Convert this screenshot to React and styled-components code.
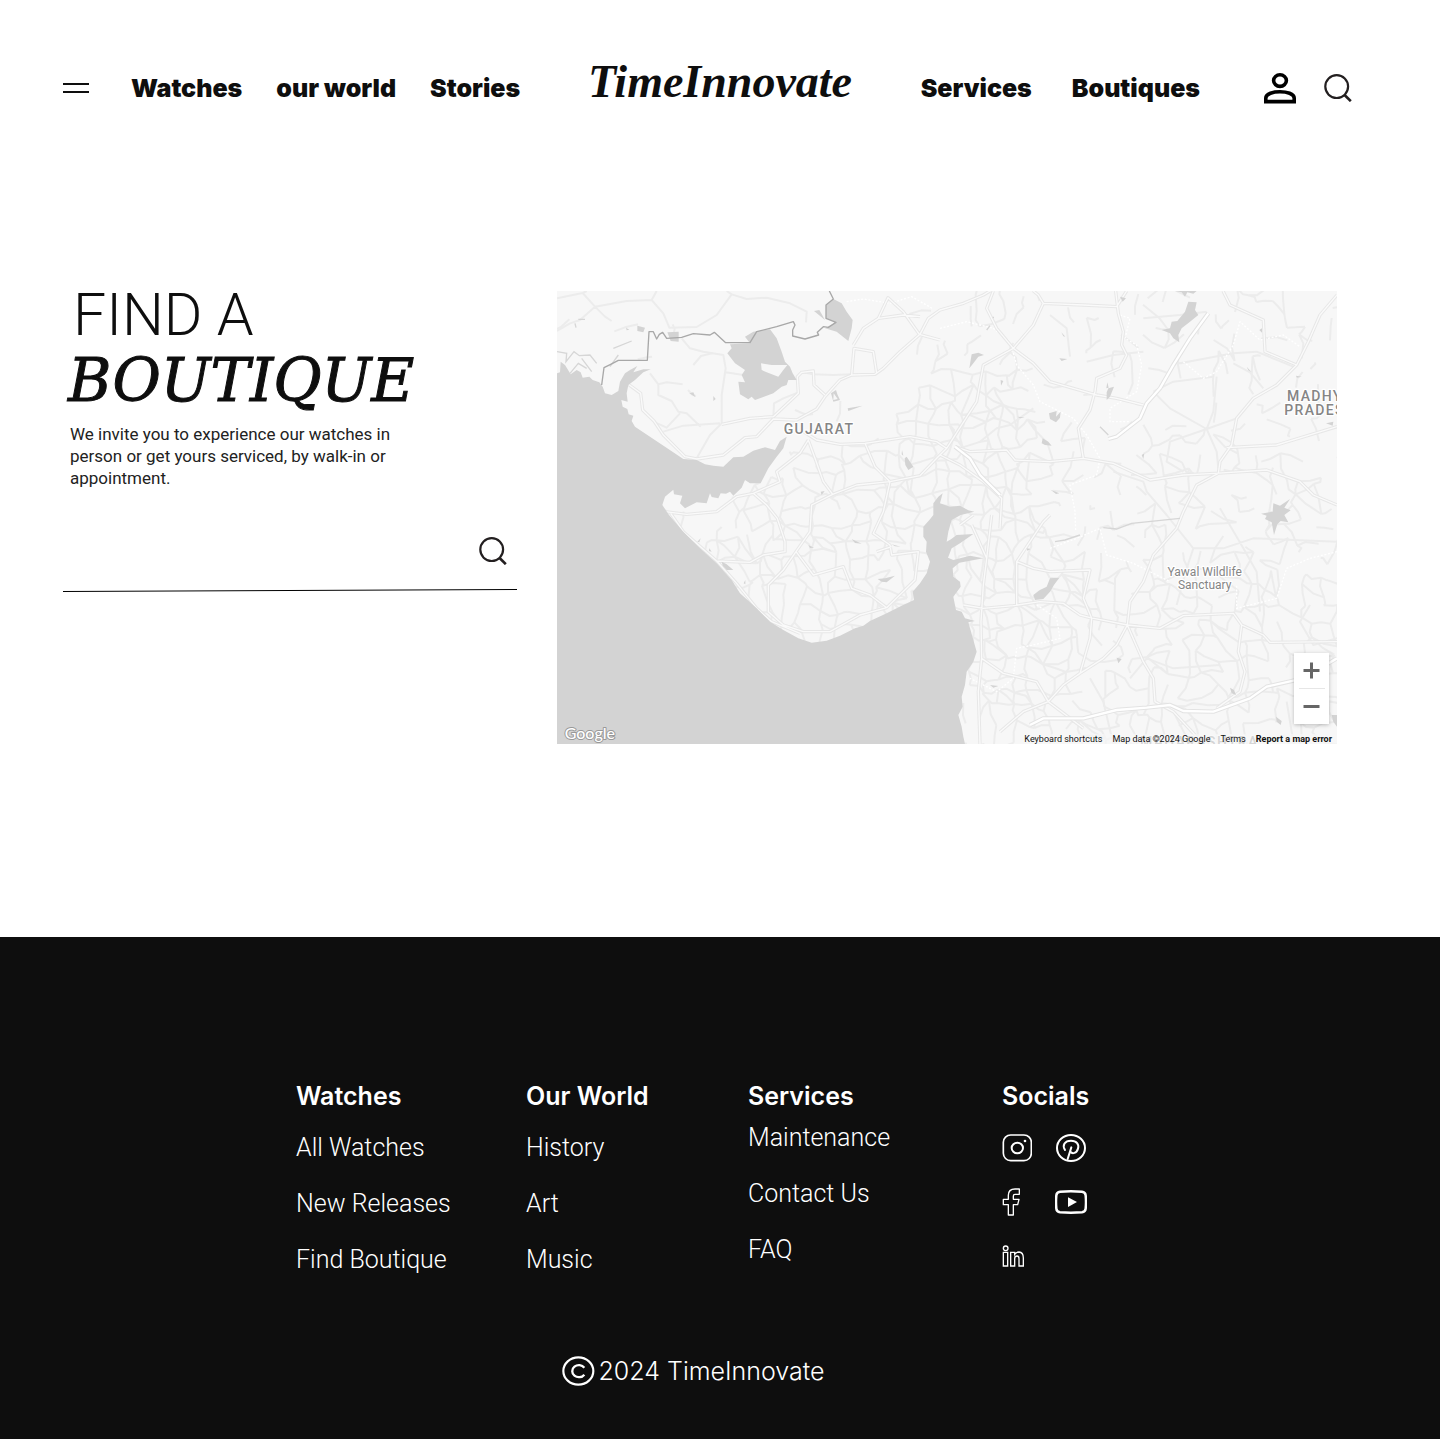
import React from "react";
import styled, { createGlobalStyle } from "styled-components";

const ink = "#0e0e0e";

const GlobalStyle = createGlobalStyle`
  *, *::before, *::after { box-sizing: border-box; }
  body {
    margin: 0;
    background: #fff;
    color: ${ink};
    font-family: Inter, "Liberation Sans", sans-serif;
  }
  a { color: inherit; text-decoration: none; }
  button { padding: 0; border: 0; background: none; color: inherit; font: inherit; cursor: pointer; }
  ul { margin: 0; padding: 0; list-style: none; }
  svg { display: block; }
`;

/* ---------- header ---------- */

const Header = styled.header`
  display: grid;
  grid-template-columns: 1fr auto 1fr;
  align-items: baseline;
  padding: 52px 63px 0;
`;

const NavGroup = styled.nav`
  display: flex;
  align-items: baseline;
  justify-content: ${(p) => (p.$end ? "flex-end" : "flex-start")};
  gap: ${(p) => p.$gap}px;
  padding-right: ${(p) => (p.$end ? 25 : 0)}px;
`;

const NavLink = styled.a`
  font-size: 25px;
  line-height: 32px;
  font-weight: 900;
  white-space: nowrap;
`;

const MenuButton = styled.button`
  align-self: center;
  display: grid;
  gap: 6px;
  width: 26px;
  margin-right: 8px;

  span { height: 2px; background: ${ink}; }
`;

const Logo = styled.a`
  font-family: "Liberation Serif", serif;
  font-size: 46px;
  line-height: 60px;
  font-style: italic;
  font-weight: 700;
`;

const IconGroup = styled.div`
  display: flex;
  align-items: center;
  align-self: center;
  gap: 28px;
  margin-left: 24px;
`;

/* ---------- boutique finder ---------- */

const Main = styled.main`
  display: grid;
  grid-template-columns: minmax(0, 454fr) minmax(0, 780fr);
  align-items: start;
  gap: 40px;
  padding: 179px 103px 193px 63px;
`;

const Finder = styled.section`
  display: flex;
  flex-direction: column;
`;

const Title = styled.h1`
  display: flex;
  flex-direction: column;
  margin: 0;
  font-weight: 400;
`;

const TitleTop = styled.span`
  padding-left: 10px;
  font-family: Roboto, sans-serif;
  font-size: 59px;
  line-height: 48px;
  font-weight: 300;
`;

const TitleBottom = styled.span`
  padding-left: 5px;
  font-family: "DejaVu Serif", serif;
  font-size: 59px;
  line-height: 84px;
  font-style: italic;
  -webkit-text-stroke: 1px ${ink};
`;

const Intro = styled.p`
  max-width: 340px;
  margin: 0 0 0 7px;
  color: #222;
  font-family: Roboto, sans-serif;
  font-size: 17px;
  line-height: 22px;
  font-weight: 400;
`;

const SearchForm = styled.form`
  display: flex;
  align-items: center;
  margin-top: 37px;
  padding: 0 10px 0 7px;
  height: 50px;

  input {
    flex: 1;
    min-width: 0;
    height: 40px;
    border: 0;
    outline: 0;
    background: none;
    font: 400 17px/22px Roboto, sans-serif;
  }
`;

const Rule = styled.svg`
  width: 100%;
  height: 4px;
  margin-top: 12px;
`;

/* ---------- map ---------- */

const MapFrame = styled.section`
  position: relative;
  overflow: hidden;
  aspect-ratio: 780 / 453;
  background: #f7f7f7;
`;

const MapDrawing = styled.svg`
  width: 100%;
  height: 100%;
`;

const ZoomControl = styled.div`
  position: absolute;
  right: 8px;
  bottom: 20px;
  display: flex;
  flex-direction: column;
  align-items: center;
  width: 35px;
  background: #fff;
  box-shadow: 0 1px 4px rgba(0, 0, 0, 0.25);
`;

const ZoomButton = styled.button`
  display: grid;
  place-items: center;
  width: 35px;
  height: 35px;
`;

const ZoomDivider = styled.div`
  width: 26px;
  height: 1px;
  background: #e6e6e6;
`;

const Attribution = styled.div`
  position: absolute;
  right: 0;
  bottom: 0;
  display: flex;
  gap: 10px;
  padding: 0 5px;
  background: rgba(247, 247, 247, 0.7);
  color: #111;
  font-family: Roboto, sans-serif;
  font-size: 9px;
  line-height: 10px;
  white-space: nowrap;
`;

const ErrorLink = styled.a`
  font-weight: 700;
`;

/* ---------- footer ---------- */

const Footer = styled.footer`
  padding: 143px 24px 52px 296px;
  background: ${ink};
  color: #fff;
`;

const FooterInner = styled.div`
  display: flex;
  flex-direction: column;
  width: fit-content;
`;

const Columns = styled.div`
  display: grid;
  grid-template-columns: 230px 222px 254px auto;
`;

const ColumnTitle = styled.h2`
  margin: 0;
  font-size: 25px;
  line-height: 32px;
  font-weight: 600;
`;

const LinkList = styled.ul`
  display: grid;
  gap: 24px;
  margin-top: ${(p) => (p.$tight ? 10 : 20)}px;
  font-family: Roboto, sans-serif;
  font-size: 25px;
  line-height: 32px;
  font-weight: 300;
`;

const Socials = styled.ul`
  display: grid;
  grid-template-columns: 50px 38px;
  grid-auto-rows: 32px;
  gap: 22px 0;
  align-items: center;
  margin-top: 20px;

  li:nth-child(even) { justify-self: center; }
  a { display: block; }
`;

const Copyright = styled.p`
  display: flex;
  align-items: center;
  justify-content: center;
  gap: 4px;
  margin: 79px 0 0;
  font-size: 25px;
  line-height: 32px;
  font-weight: 300;
`;

/* ---------- icons ---------- */

const SearchIcon = () => (
  <svg width="28" height="28" viewBox="0 0 28 28" fill="none" stroke="#231f20" strokeWidth="2.2" aria-hidden="true">
    <circle cx="12.7" cy="12.6" r="11.4" />
    <path d="M20.6 21l6.2 6.2" strokeWidth="2.6" />
  </svg>
);

const PersonIcon = () => (
  <svg width="32" height="31" viewBox="0 0 32 31" fill="none" stroke="#000" strokeWidth="3.6" aria-hidden="true">
    <ellipse cx="16" cy="7.6" rx="6.4" ry="5.8" />
    <path d="M1.8 28.6V25C1.8 20.6 9.4 18.8 16 18.8S30.2 20.6 30.2 25v3.6z" />
  </svg>
);

const InstagramIcon = () => (
  <svg width="30" height="28" viewBox="37 192 90 84" fill="none" stroke="#fff" strokeWidth="5" aria-hidden="true">
    <rect x="41" y="195" width="84" height="77" rx="22" />
    <ellipse cx="83" cy="234" rx="17" ry="16" strokeWidth="6" />
    <circle cx="106" cy="213" r="4" fill="#fff" stroke="none" />
  </svg>
);

const PinterestIcon = () => (
  <svg width="30" height="28" viewBox="201 197 90 84" fill="none" stroke="#fff" strokeWidth="6" strokeLinecap="round" aria-hidden="true">
    <ellipse cx="246" cy="239" rx="42" ry="39" />
    <path d="M228 245C219 231 227 217 246 217c17 0 25 11 21 24-4 14-17 17-23 9M247 237l-11 35" />
  </svg>
);

const FacebookIcon = () => (
  <svg width="18" height="28" viewBox="40 354 54 84" fill="none" stroke="#fff" strokeWidth="4" strokeLinejoin="round" aria-hidden="true">
    <path d="M59 435h15v-31h13l4-16H74v-10q0-5 5-5h13v-16H79q-20 0-20 19v12H44v16h15z" />
  </svg>
);

const YoutubeIcon = () => (
  <svg width="32" height="24" viewBox="186 366 96 72" fill="none" stroke="#fff" strokeWidth="7.5" aria-hidden="true">
    <path d="M201 371q32-2 66 0 10 1 11 11 2 20 0 40-1 10-11 11-34 2-66 0-10-1-11-11-2-20 0-40 1-10 11-11z" />
    <path d="M225 388l27 14-27 15z" fill="#fff" stroke="none" />
  </svg>
);

const LinkedinIcon = () => (
  <svg width="22" height="22" viewBox="37 527 66 66" fill="none" stroke="#fff" strokeWidth="4" aria-hidden="true">
    <circle cx="48" cy="537" r="7" />
    <path d="M41 549h13v41H41zM63 549h12v6q5-7 13-7 13 1 13 18v24H88v-22q0-8-6-8-7 0-7 8v22H63z" />
  </svg>
);

const CopyrightIcon = () => (
  <svg width="33" height="30" viewBox="57 47 99 90" fill="none" stroke="#fff" strokeWidth="6.5" aria-hidden="true">
    <ellipse cx="106" cy="92" rx="45" ry="41" />
    <path d="M124 82a20 18 0 1 0 0 21" strokeWidth="7" />
  </svg>
);

/* ---------- map data ---------- */

// Small repeatable generator, so the side roads are the same on every visit.
const createRandom = (seed) => {
  let s = seed;
  return () => {
    s = (s * 16807) % 2147483647;
    return s / 2147483647;
  };
};

const near = (x, y, cx, cy, rx, ry) => Math.hypot((x - cx) / rx, (y - cy) / ry) < 1;

const roadDensity = (x, y) => {
  if (near(x, y, 1230, 490, 230, 240)) return 0.95;
  if (near(x, y, 850, 790, 380, 270)) return 0.78;
  if (near(x, y, 1390, 970, 190, 330)) return 0.85;
  if (x > 1500 && y > 850) return 0.6;
  if (x > 1300 && y > 500) return 0.4;
  if (x > 1080) return 0.22;
  if (y > 470 && x > 690) return 0.6;
  return 0.04;
};

const buildSideRoads = () => {
  const random = createRandom(4711);
  const step = 50;
  const cols = 48;
  const rows = 28;
  const nodes = Array.from({ length: rows + 1 }, (_, r) =>
    Array.from({ length: cols + 1 }, (_, c) => [
      Math.round(c * step + (random() - 0.5) * 44),
      Math.round(18 + r * step + (random() - 0.5) * 44),
    ])
  );
  const parts = [];
  const link = (a, b) => {
    if (random() > roadDensity(a[0], a[1])) return;
    const mx = Math.round((a[0] + b[0]) / 2 + (random() - 0.5) * 20);
    const my = Math.round((a[1] + b[1]) / 2 + (random() - 0.5) * 20);
    parts.push(`M${a[0]} ${a[1]}L${mx} ${my} ${b[0]} ${b[1]}`);
  };
  for (let r = 0; r < rows; r++) {
    for (let c = 0; c < cols; c++) {
      link(nodes[r][c], nodes[r][c + 1]);
      link(nodes[r][c], nodes[r + 1][c]);
      if (random() < 0.2) link(nodes[r][c], nodes[r + 1][c + 1]);
    }
  }
  return parts.join("");
};

const sideRoads = buildSideRoads();

const quietRoads = [
  "M21 40L98 24 135 65 230 48 305 45 320 18M98 24L110 18M21 138L60 115 90 105 135 65 165 95 185 108M305 45L340 85 358 128 440 126 500 90 545 28 530 18M545 28L590 42 650 38 720 55 770 80 768 112",
  "M300 265L325 298 350 292 398 298M325 298L325 330 365 348 385 380 410 385 452 425M310 410L350 428 390 385M527 262L580 270 640 262 710 245M750 260L790 268 850 270 905 268M340 440L400 422 510 415M440 520L480 450 515 415M395 160L420 190 460 200 520 210 527 250 515 330 515 415M670 400L672 355 700 340 745 322",
  "M1290 470L1340 430 1380 420 1450 370M1610 230L1690 210 1780 200M1810 320L1870 290 1990 275M1810 320L1860 370 1970 432 2060 400M1970 432L2000 500 2005 550M1970 432L1860 470 1850 530 1900 560M1560 215L1550 130 1500 90M2000 275L1990 380 1970 432M2050 235L2100 262 2140 310M2230 245L2120 200 2050 205 1890 235M1895 235L1870 235M1780 100L1890 90 1970 80",
  "M1690 560L1780 590 1790 620 1850 690 1930 790 2020 790 2110 760 2361 770M1930 790L1910 850 1880 960M2010 670L2080 790 2120 860 2130 980M2280 960L2250 1010 2290 1080 2361 1060M1620 1180L1660 1250 1690 1377M1740 1180L1790 1120 1870 1150 2010 1140M1870 1280L1920 1377M2210 1250L2230 1370",
].join("");

const mainRoads = [
  "M235 298L272 325 278 375 312 408 340 450 405 515 440 522 520 510 585 458 620 455 670 402 740 405 800 372 825 335 870 285 905 270 975 268 1000 250 1050 200 1110 148 1135 100 1170 75 1240 55 1300 30 1320 18",
  "M515 418L600 400 670 395 745 325 742 275 755 262 790 258 792 300 825 330M910 180L940 130 985 100 1014 38 1060 80 1108 148 1170 165M905 270L912 190 970 200 980 265M985 100L1060 90 1110 95",
  "M760 440L800 465 870 478 945 475 1080 455 1160 470 1190 490M945 475L975 545 1020 590 1110 572 1160 520 1190 490 1235 420 1280 350 1300 240 1390 190 1450 120 1480 55M1480 55L1465 30 1450 18M1480 55L1600 60 1700 65 1730 18M1330 18L1310 70 1340 130 1390 190 1450 235 1500 290 1570 310 1640 330 1700 340 1780 360",
  "M345 680L410 688 500 680 560 635 610 625 690 590 680 560 750 505 775 465M775 465L795 520 820 590 848 628 920 600 1020 590M848 628L785 660 780 740 738 800 700 855 655 900 655 980 700 1020 760 1040 840 1040 930 990 1010 968 1095 885 1105 800 1025 810 1020 780 970 745 1000 680 1020 590",
  "M610 625L650 660 682 700 705 770 705 800 640 810 600 832 500 828M738 800L790 870 880 845 905 910 960 930 1010 968M1025 785L980 800",
  "M362 685L400 740 500 828 560 895 620 970 665 1010 750 1045",
  "M1215 485L1260 500 1370 495 1395 525 1500 530 1600 520 1690 535 1800 585 1900 570 1995 565 2150 555 2250 590 2290 630 2361 660M1170 510L1230 540 1300 590 1355 640 1350 730",
  "M1697 18L1705 85 1720 140 1715 180 1730 210 1710 250 1640 280 1635 320 1620 375 1585 430 1600 520M2019 18L2040 60 2140 105 2145 200 2240 240 2180 300 2110 340 2060 400 2045 480 2010 530 2005 565 1940 600 1900 680 1880 730 1810 810 1780 890 1740 950 1732 1020M2240 240L2275 170 2310 90 2361 30M2030 488L2180 480 2361 425",
  "M1325 690L1310 820 1300 900 1293 1010 1295 1120 1285 1220 1290 1377M1230 720L1270 690M1265 720L1310 820M1240 960L1300 970 1390 962 1470 950 1540 955 1590 990 1620 998 1732 1020 1830 1030 1900 992 2050 985 2075 1020 2140 1050 2160 1072 2361 1070M1400 960L1400 830 1480 710 1500 690",
  "M1400 830L1450 850 1500 860 1620 855 1600 940 1625 1000 1620 1060 1590 1165M1732 1020L1780 1130 1810 1180 1815 1250 1870 1280 1960 1377M1732 1020L1700 1080 1660 1120 1590 1165 1540 1200 1495 1250 1420 1280 1350 1340M1295 1120L1360 1165 1460 1190 1495 1250 1600 1330M2075 1020L2065 1100 2085 1160 2070 1220 2000 1270",
].join("");

const highways = [
  "M1215 485L1260 520 1290 570 1350 630",
  "M1675 462L1700 455 1770 400 1790 355 1830 310 1870 240 1920 160 1975 85",
  "M1440 1320L1480 1300 1600 1300 1700 1275 1790 1268 1860 1260 1900 1278 1990 1280 2100 1240 2150 1205 2260 1180 2361 1120",
].join("");

const trails =
  "M890 50L940 42 1020 55 1085 35 1150 72M1170 130L1250 110 1330 130 1380 170 1400 240 1450 300 1470 350 1570 400 1610 450 1650 520 1640 570 1560 600 1575 680 1577 740M1710 90L1740 100 1725 160 1760 180 1775 240 1760 320 1680 370 1680 410 1740 410M1900 230L1960 280 2000 260 2050 180 2070 110 2130 165 2200 150 2250 185M1500 790L1580 760 1650 730 1670 810 1750 835 1820 870 1860 890M2361 800L2280 820 2210 850 2180 940 2060 970 2060 900M1460 960L1520 1000 1530 1060 1450 1080 1400 1090 1390 1180 1340 1220 1260 1180";

const sea =
  "M21 265L30 262 32 230 45 240 62 268 80 255 92 262 98 278 118 275 128 285 148 292 158 305 165 325 185 330 205 318 210 290 225 265 240 255 262 243 250 262 280 253 302 253 280 262 255 285 235 300 230 325 233 350 214 345 218 365 232 372 236 388 250 392 245 408 255 425 300 455 345 485 400 522 440 525 465 538 490 542 520 545 550 517 580 515 610 497 645 487 675 495 690 468 710 455 700 490 680 515 655 550 632 595 600 595 585 585 575 608 550 632 540 620 528 626 512 625 505 640 485 636 480 625 470 655 440 652 405 670 390 655 397 632 372 628 370 614 345 635 337 660 357 690 400 740 450 790 500 835 545 885 570 925 620 970 660 1010 700 1035 745 1060 785 1073 830 1067 870 1052 915 1030 940 1022 960 1008 1010 985 1055 962 1092 945 1088 920 1110 895 1130 865 1140 830 1128 800 1130 770 1120 755 1120 725 1140 703 1150 690 1150 655 1165 635 1178 625 1170 655 1200 665 1230 662 1255 676 1273 680 1232 690 1205 705 1195 740 1190 770 1203 763 1220 750 1270 747 1230 775 1205 790 1194 818 1210 825 1260 812 1300 820 1228 833 1208 850 1210 875 1230 890 1232 905 1210 935 1218 975 1235 980 1245 1000 1275 1008 1255 1012 1270 1065 1280 1100 1270 1130 1250 1160 1245 1200 1235 1235 1238 1265 1225 1290 1235 1325 1240 1355 1245 1377H21z";

const lakes = [
  "M585 155L610 140 660 133 680 160 695 200 705 230 720 245 728 265 740 285 715 285 710 300 695 305 670 325 615 345 605 335 595 343 570 328 565 290 585 292 575 270 585 255 555 235 532 205 545 190 540 178 600 175z",
  "M850 42L875 55 890 80 908 105 905 130 895 168 860 140 825 130 858 112 828 100 828 60zM792 78L808 75 825 105z",
  "M352 142L386 140 386 170 362 168zM262 122L285 128 280 142 262 138zM228 128L238 134 230 136zM418 325L430 322 436 336zM490 333L497 342 490 348zM893 370L938 362 895 378zM843 325L858 315 862 328 870 345 850 350zM851 325L850 345 863 342z",
  "M1064 520L1070 515 1090 545 1075 555 1066 540zM1056 495L1060 512 1055 508zM812 620L824 618 815 630zM1915 50L1940 52 1935 75 1945 90 1920 110 1895 130 1885 150 1888 172 1870 160 1860 145 1835 135 1860 130 1865 110 1882 108 1905 80zM1875 18L1940 18 1930 26 1912 22 1905 35 1895 22z",
  "M1265 208L1285 203 1302 210 1285 215 1270 235 1258 250 1262 225zM1352 285L1360 288 1353 302zM1528 220L1552 222 1535 228zM1534 142L1546 155 1540 154zM1710 35L1728 40 1718 50zM1670 322L1675 310 1692 305 1680 335 1670 345zM1672 292L1676 308 1669 310z",
  "M1497 385L1520 378 1518 395 1532 380 1530 398 1518 412 1500 402zM1478 460L1495 470 1505 482 1485 480 1475 475zM1402 395L1424 397 1410 400zM1775 510L1783 505 1780 522zM1502 614L1528 625 1518 627zM2328 415L2350 410 2348 422zM2128 135L2136 130 2136 143zM2090 245L2105 262 2095 256zM2238 272L2255 275 2240 278z",
  "M2220 642L2203 668 2222 676 2203 690 2215 712 2192 708 2182 718 2172 750 2165 712 2145 702 2150 692 2133 686 2168 680 2170 655 2190 662z",
  "M1450 930L1470 915 1490 905 1500 880 1528 878 1512 900 1500 920 1480 942 1455 945zM1700 1118L1715 1122 1705 1135zM2040 1208L2052 1215 2058 1230 2045 1225zM2178 1295L2195 1308 2192 1320 2180 1310zM2345 1290L2361 1290 2361 1325 2350 1310zM1430 790L1442 792 1432 797zM1320 1200L1345 1203 1330 1208z",
  "M515 830L530 838 550 855 530 855 518 842zM983 882L1005 880 1035 872 1010 892 995 890zM452 760L442 770 448 772zM775 780L792 788 780 789zM478 790L485 800 477 798zM586 885L586 898 581 895zM905 762L935 776 915 774zM1025 778L1052 785 1035 784z",
].join("");

const border =
  "M838 18L850 42 828 60 828 100 858 112 835 127 820 125 802 142 806 150 765 162 728 153 728 135 735 120 730 110 680 125 620 140 600 173 527 173 493 142 480 150 430 146 395 157 350 160 338 142 328 148 320 162 310 140 297 140 292 226 205 226 182 238 162 248 155 300";

const MapLabel = styled.text`
  font-family: Roboto, sans-serif;
  font-size: ${(p) => p.$size}px;
  font-weight: ${(p) => p.$weight || 500};
  letter-spacing: ${(p) => p.$spacing || 0}px;
  fill: #858585;
  stroke: #fff;
  stroke-width: 7px;
  stroke-linejoin: round;
  paint-order: stroke;
`;

const Wordmark = styled.text`
  font-family: Lato, sans-serif;
  font-size: 48px;
  font-weight: 500;
  fill: #fff;
  stroke: #999;
  stroke-width: 6px;
  stroke-linejoin: round;
  paint-order: stroke;
`;

const BoutiqueMap = () => (
  <MapFrame aria-label="Boutique map">
    <MapDrawing viewBox="21 18 2340 1359" preserveAspectRatio="xMidYMid slice">
      <rect x="21" y="18" width="2340" height="1359" fill="#f7f7f7" />
      <g fill="none" strokeLinejoin="round">
        <path d={sideRoads} stroke="#ececec" strokeWidth="6" />
        <path d={quietRoads} stroke="#ececec" strokeWidth="6" />
        <path d={trails} stroke="#fff" strokeWidth="4" strokeDasharray="6 5" />
        <path d={mainRoads} stroke="#e7e7e7" strokeWidth="10" />
        <path d={mainRoads} stroke="#fafafa" strokeWidth="4" />
        <path d={highways} stroke="#e3e3e3" strokeWidth="13" />
        <path d={highways} stroke="#fff" strokeWidth="7" />
      </g>
      <path d={sea} fill="#d3d3d3" />
      <path d={lakes} fill="#d3d3d3" fillRule="evenodd" />
      <path d="M633 235L665 240 712 240 700 255 685 275 650 262 635 255zM160 262L180 240 195 265 175 300 165 285z" fill="#f7f7f7" />
      <g fill="none" stroke="#d6d6d6" strokeWidth="4">
        <path d="M21 200L50 205 48 230 72 200 88 212 120 210 140 235M60 265L85 235 110 250M95 220L125 260M190 190L245 168M75 115L78 128M85 103H105M205 210L180 245" />
        <path d="M1515 770L1545 765 1590 750M1660 728L1700 732 1745 715 1890 700M1650 425L1675 450M1310 135L1320 122M1330 95V100" />
      </g>
      <path d={border} fill="none" stroke="#a8a8a8" strokeWidth="4" strokeLinejoin="round" />
      <MapLabel x="701" y="447" $size={42} $spacing={4}>GUJARAT</MapLabel>
      <MapLabel x="2211" y="347" $size={42} $spacing={4}>MADHYA</MapLabel>
      <MapLabel x="2203" y="389" $size={42} $spacing={4}>PRADESH</MapLabel>
      <MapLabel x="1964" y="873" $size={36} $weight={400} textAnchor="middle">Yawal Wildlife</MapLabel>
      <MapLabel x="1964" y="911" $size={36} $weight={400} textAnchor="middle">Sanctuary</MapLabel>
      <MapLabel x="1770" y="1386" $size={42} $spacing={4}>MAHARASHTRA</MapLabel>
      <Wordmark x="44" y="1361">Google</Wordmark>
    </MapDrawing>
    <ZoomControl>
      <ZoomButton type="button" aria-label="Zoom in">
        <svg width="17" height="17" viewBox="0 0 17 17" stroke="#666" strokeWidth="3" aria-hidden="true">
          <path d="M0.5 8.5h16M8.5 0.5v16" />
        </svg>
      </ZoomButton>
      <ZoomDivider />
      <ZoomButton type="button" aria-label="Zoom out">
        <svg width="17" height="17" viewBox="0 0 17 17" stroke="#666" strokeWidth="3" aria-hidden="true">
          <path d="M0.5 8.5h16" />
        </svg>
      </ZoomButton>
    </ZoomControl>
    <Attribution>
      <button type="button">Keyboard shortcuts</button>
      <span>Map data ©2024 Google</span>
      <a href="#terms">Terms</a>
      <ErrorLink href="#report">Report a map error</ErrorLink>
    </Attribution>
  </MapFrame>
);

/* ---------- page ---------- */

const footerColumns = [
  { title: "Watches", links: ["All Watches", "New Releases", "Find Boutique"] },
  { title: "Our World", links: ["History", "Art", "Music"] },
  { title: "Services", links: ["Maintenance", "Contact Us", "FAQ"], tight: true },
];

const socials = [
  ["Instagram", InstagramIcon],
  ["Pinterest", PinterestIcon],
  ["Facebook", FacebookIcon],
  ["YouTube", YoutubeIcon],
  ["LinkedIn", LinkedinIcon],
];

export default function App() {
  return (
    <>
      <GlobalStyle />
      <Header>
        <NavGroup $gap={34} aria-label="Main">
          <MenuButton type="button" aria-label="Menu">
            <span />
            <span />
          </MenuButton>
          <NavLink href="#watches">Watches</NavLink>
          <NavLink href="#our-world">our world</NavLink>
          <NavLink href="#stories">Stories</NavLink>
        </NavGroup>
        <Logo href="#home">TimeInnovate</Logo>
        <NavGroup $end $gap={40} aria-label="Services">
          <NavLink href="#services">Services</NavLink>
          <NavLink href="#boutiques">Boutiques</NavLink>
          <IconGroup>
            <button type="button" aria-label="Account"><PersonIcon /></button>
            <button type="button" aria-label="Search"><SearchIcon /></button>
          </IconGroup>
        </NavGroup>
      </Header>

      <Main>
        <Finder>
          <Title>
            <TitleTop>FIND A</TitleTop>
            <TitleBottom>BOUTIQUE</TitleBottom>
          </Title>
          <Intro>
            We invite you to experience our watches in person or get yours serviced, by walk-in or appointment.
          </Intro>
          <SearchForm role="search" onSubmit={(e) => e.preventDefault()}>
            <input type="text" aria-label="Search boutiques" />
            <button type="submit" aria-label="Search"><SearchIcon /></button>
          </SearchForm>
          <Rule viewBox="0 0 454 4" preserveAspectRatio="none" aria-hidden="true">
            <path d="M0 3.5L454 1.5" stroke="#000" strokeWidth="1" />
          </Rule>
        </Finder>
        <BoutiqueMap />
      </Main>

      <Footer>
        <FooterInner>
          <Columns>
            {footerColumns.map(({ title, links, tight }) => (
              <section key={title}>
                <ColumnTitle>{title}</ColumnTitle>
                <LinkList $tight={tight}>
                  {links.map((label) => (
                    <li key={label}><a href="#top">{label}</a></li>
                  ))}
                </LinkList>
              </section>
            ))}
            <section>
              <ColumnTitle>Socials</ColumnTitle>
              <Socials>
                {socials.map(([name, Icon]) => (
                  <li key={name}><a href="#top" aria-label={name}><Icon /></a></li>
                ))}
              </Socials>
            </section>
          </Columns>
          <Copyright>
            <CopyrightIcon />
            2024 TimeInnovate
          </Copyright>
        </FooterInner>
      </Footer>
    </>
  );
}
